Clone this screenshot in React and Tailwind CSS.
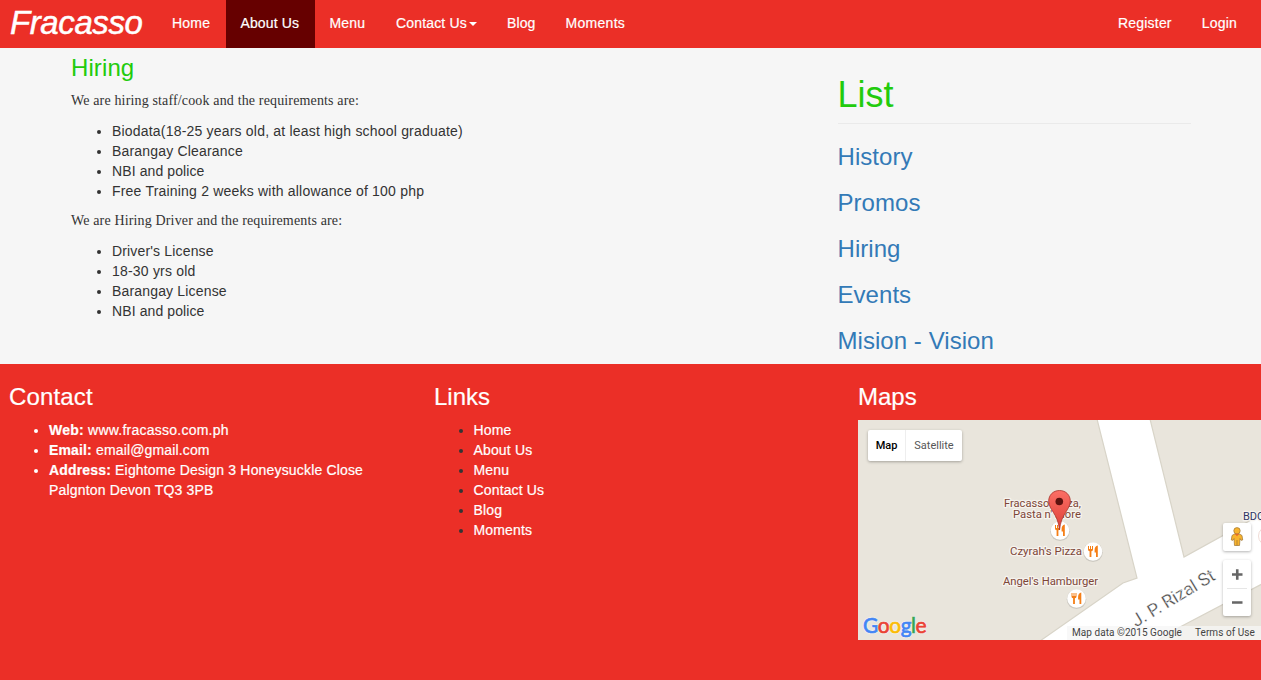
const navItems = [
  { label: 'Home', cls: 'w-[69px] tracking-[0.2px]' },
  { label: 'About Us', cls: 'w-[89px] bg-[#660000] tracking-[0.12px] -ml-[0.5px]' },
  { label: 'Menu', cls: 'w-[66.5px] tracking-[0.2px]' },
  { label: 'Contact Us', cls: 'w-[111px] tracking-[0.16px]', caret: true },
  { label: 'Blog', cls: 'w-[58.5px] tracking-[0.1px]' },
  { label: 'Moments', cls: 'w-[90px] tracking-[0.3px]' },
];

const staff = [
  { t: 'Biodata(18-25 years old, at least high school graduate)', cls: 'tracking-[0.195px]' },
  { t: 'Barangay Clearance', cls: 'tracking-[0.18px]' },
  { t: 'NBI and police', cls: 'tracking-[0.1px]' },
  { t: 'Free Training 2 weeks with allowance of 100 php', cls: 'tracking-[0.2px]' },
];
const driver = [
  { t: "Driver's License", cls: 'tracking-[0.16px]' },
  { t: '18-30 yrs old', cls: 'tracking-[0.2px]' },
  { t: 'Barangay License', cls: 'tracking-[0.17px]' },
  { t: 'NBI and police', cls: 'tracking-[0.1px]' },
];
const sections = ['History', 'Promos', 'Hiring', 'Events', 'Mision - Vision'];
const links = ['Home', 'About Us', 'Menu', 'Contact Us', 'Blog', 'Moments'];

function Navbar() {
  return (
    <nav className="flex h-12 bg-[#eb2f27] text-sm leading-5 text-white [-webkit-text-stroke:0.2px_currentColor]">
      <a className="w-[157px] pl-[10px] pt-[3px] text-[33px] leading-10 tracking-[-0.4px] italic [-webkit-text-stroke:0.5px_currentColor]">Fracasso</a>
      {navItems.map((n) => (
        <a key={n.label} className={`flex h-12 items-start pl-[15px] pt-[13px] whitespace-nowrap ${n.cls}`}>
          {n.label}
          {n.caret && (
            <span className="ml-[2px] mt-[9px] border-x-4 border-t-4 border-x-transparent border-t-white" />
          )}
        </a>
      ))}
      <div className="ml-auto flex gap-[30px] pr-[24px] pt-[13px]">
        <a className="tracking-[0.2px]">Register</a>
        <a className="tracking-[0.2px]">Login</a>
      </div>
    </nav>
  );
}

function Bullets({ items }) {
  return (
    <ul className="mb-[10px] list-disc pl-[41px] text-sm leading-5 text-[#333]">
      {items.map((item) => (
        <li key={item.t} className={item.cls}>{item.t}</li>
      ))}
    </ul>
  );
}

function Food({ x, y }) {
  return (
    <g transform={`translate(${x} ${y})`}>
      <circle r="9.8" cy="0.8" fill="#000" opacity="0.12" />
      <circle r="9.3" fill="#fff" />
      <path d="M-5 -5.500v3.500q0 1.500 1.600 1.800V5.500h1.800V-.2Q0 -.5 0 -2V-5.500h-1v3h-1V-5.500h-1v3h-1V-5.500z" fill="#f57f17" />
      <path d="M4.800 -6Q1.600 -5.500 1.600 -1.500V1h1.400v4.500h1.800z" fill="#f57f17" />
    </g>
  );
}

function MapPanel() {
  return (
    <div className="relative h-[220px] w-[403px] overflow-hidden bg-[#e9e5dc] font-[Roboto,sans-serif] [-webkit-text-stroke:0px]">
      <svg className="block" width="403" height="220" viewBox="858 420 403 220">
        <path
          d="M1097 419L1137 578L1123 583L1040 641H1156L1180 627L1262 584V514L1184 557L1150 419Z"
          fill="#fff"
          stroke="#d8d4c8"
          strokeWidth="1.200"
        />
        <circle cx="1268" cy="536" r="9.500" fill="#fff" stroke="#f0dcd6" />
        <text transform="translate(1136 627.500) rotate(-31)" fontSize="18" fill="#4a4a4a" stroke="#fff" strokeWidth="0.300" textLength="94">J. P. Rizal St</text>
        <Food x={1060} y={530.5} />
        <Food x={1093} y={551.5} />
        <Food x={1076.5} y={598.5} />
        <g fontSize="11" fill="#7d4638" stroke="#f6f3ee" strokeWidth="2.500" paintOrder="stroke" strokeLinejoin="round">
          <text x="1004" y="507" textLength="77" lengthAdjust="spacingAndGlyphs">Fracasso Pizza,</text>
          <text x="1013" y="518" textLength="68" lengthAdjust="spacingAndGlyphs">Pasta n' More</text>
          <text x="1010" y="555" textLength="72" lengthAdjust="spacingAndGlyphs">Czyrah's Pizza</text>
          <text x="1003" y="585" textLength="95" lengthAdjust="spacingAndGlyphs">Angel's Hamburger</text>
          <text x="1243" y="520" fill="#2f3566">BDO</text>
        </g>
        <defs>
          <linearGradient id="pin" x1="0" y1="0" x2="0" y2="1">
            <stop offset="0" stopColor="#fb6f66" />
            <stop offset="1" stopColor="#dd3f36" />
          </linearGradient>
        </defs>
        <path
          d="M1059.500 490.500C1053 490.500 1048.700 495.300 1048.700 501C1048.700 510 1057.800 513 1059.500 530C1061.200 513 1070.300 510 1070.300 501C1070.300 495.300 1066 490.500 1059.500 490.500Z"
          fill="url(#pin)"
          stroke="#a8332c"
          strokeWidth="0.800"
        />
        <circle cx="1059.300" cy="501.500" r="3.800" fill="#5c120f" />
      </svg>
      <div className="absolute left-[10px] top-[10px] flex h-[31px] w-[94px] rounded-[2px] bg-white text-[11px] leading-[31px] shadow-[0_1px_3px_rgba(0,0,0,0.3)]">
        <span className="w-[38px] border-r border-[#eee] text-center font-medium text-black">Map</span>
        <span className="flex-1 text-center text-[#565656]">Satellite</span>
      </div>
      <div className="absolute left-[365px] top-[103px] flex h-7 w-7 justify-center rounded-[2px] bg-white pt-1 shadow-[0_1px_3px_rgba(0,0,0,0.3)]">
        <svg width="14" height="20" viewBox="0 0 14 20">
          <path d="M4.500 7L2 8.500L1.300 13L3 13.300L4 11.500L4.500 18.500H9.500L10 11.500L11 13.300L12.700 13L12 8.500L9.500 7Z" fill="#f9b42d" stroke="#9c7436" strokeWidth=".7" />
          <path d="M7 13V18.500" stroke="#9c7436" strokeWidth=".7" />
          <circle cx="7" cy="3.800" r="3.200" fill="#f9b42d" stroke="#9c7436" strokeWidth=".7" />
          <path d="M4.800 6.800H9.200L7 9.200Z" fill="#e8672a" />
        </svg>
      </div>
      <div className="absolute left-[365px] top-[140px] flex h-14 w-7 flex-col items-center rounded-[2px] bg-white shadow-[0_1px_3px_rgba(0,0,0,0.3)]">
        <svg width="28" height="56" viewBox="0 0 28 56">
          <path d="M9 14.500H19.500M14.250 9.300V19.700M9 42.500H19.500" stroke="#666" strokeWidth="2.600" />
          <path d="M4 28.500H24" stroke="#e6e6e6" />
        </svg>
      </div>
      <div className="absolute left-[5px] top-[192px] flex font-[Lato,sans-serif] text-[21px] leading-[26px] tracking-[-0.5px] [-webkit-text-stroke:0.7px_currentColor] [text-shadow:0_0_2px_#fff,0_0_2px_#fff]">
        <span className="text-[#4285f4]">G</span>
        <span className="text-[#ea4335]">o</span>
        <span className="text-[#fbbc05]">o</span>
        <span className="text-[#4285f4]">g</span>
        <span className="text-[#34a853]">l</span>
        <span className="text-[#ea4335]">e</span>
      </div>
      <div className="absolute bottom-0 right-0 flex h-[14px] text-[10px] leading-[14px] text-[#444]">
        <span className="w-[122px] bg-[#f5f5f5]/75 pl-[5px] tracking-[0.050px]">Map data ©2015 Google</span>
        <span className="w-[72px] bg-[#f5f5f5]/75 pl-[6px] tracking-[0.050px] whitespace-nowrap">Terms of Use</span>
      </div>
    </div>
  );
}

export default function App() {
  return (
    <div className="h-[680px] w-[1261px] overflow-hidden bg-[#eb2f27] font-['Liberation_Sans',Arial,sans-serif]">
      <Navbar />
      <main className="flex h-[316px] bg-[#f6f6f6] pl-[71px]">
        <section className="w-[766.5px] pt-[7px]">
          <h3 className="mb-[10px] text-2xl leading-[26px] tracking-[0.1px] text-[#22cb0c]">Hiring</h3>
          <p className="mb-[10px] font-['Liberation_Serif',serif] text-sm leading-5 tracking-[0.15px] text-[#333]">We are hiring staff/cook and the requirements are:</p>
          <Bullets items={staff} />
          <p className="mb-[10px] font-['Liberation_Serif',serif] text-sm leading-5 tracking-[0.15px] text-[#333]">We are Hiring Driver and the requirements are:</p>
          <Bullets items={driver} />
        </section>
        <aside className="w-[353px] pt-[27px]">
          <h1 className="mb-5 border-b border-[#eaeaea] pb-[9px] text-4xl leading-[39px] text-[#22cb0c]">List</h1>
          <div className="flex flex-col gap-5 text-2xl leading-[26px] tracking-[0.05px] text-[#337ab7]">
            {sections.map((s) => (
              <a key={s}>{s}</a>
            ))}
          </div>
        </aside>
      </main>
      <footer className="flex pt-5 text-sm leading-5 text-white [-webkit-text-stroke:0.2px_currentColor]">
        <section className="w-[424px] pl-[9px]">
          <h3 className="mb-[10px] text-2xl leading-[26px] tracking-[0.15px]">Contact</h3>
          <ul className="w-[365px] list-disc pl-[40px] tracking-[0.17px]">
            <li className="tracking-[0.24px]"><b>Web:</b> www.fracasso.com.ph</li>
            <li className="tracking-[0.15px]"><b>Email:</b> email@gmail.com</li>
            <li><b>Address:</b> Eightome Design 3 Honeysuckle Close<br />Palgnton Devon TQ3 3PB</li>
          </ul>
        </section>
        <section className="w-[434px] pl-[10px]">
          <h3 className="mb-[10px] text-2xl leading-[26px]">Links</h3>
          <ul className="list-disc pl-[39.5px] tracking-[0.15px] marker:text-[#333]">
            {links.map((l) => (
              <li key={l}>{l}</li>
            ))}
          </ul>
        </section>
        <section className="w-[403px]">
          <h3 className="mb-[10px] text-2xl leading-[26px]">Maps</h3>
          <MapPanel />
        </section>
      </footer>
    </div>
  );
}
